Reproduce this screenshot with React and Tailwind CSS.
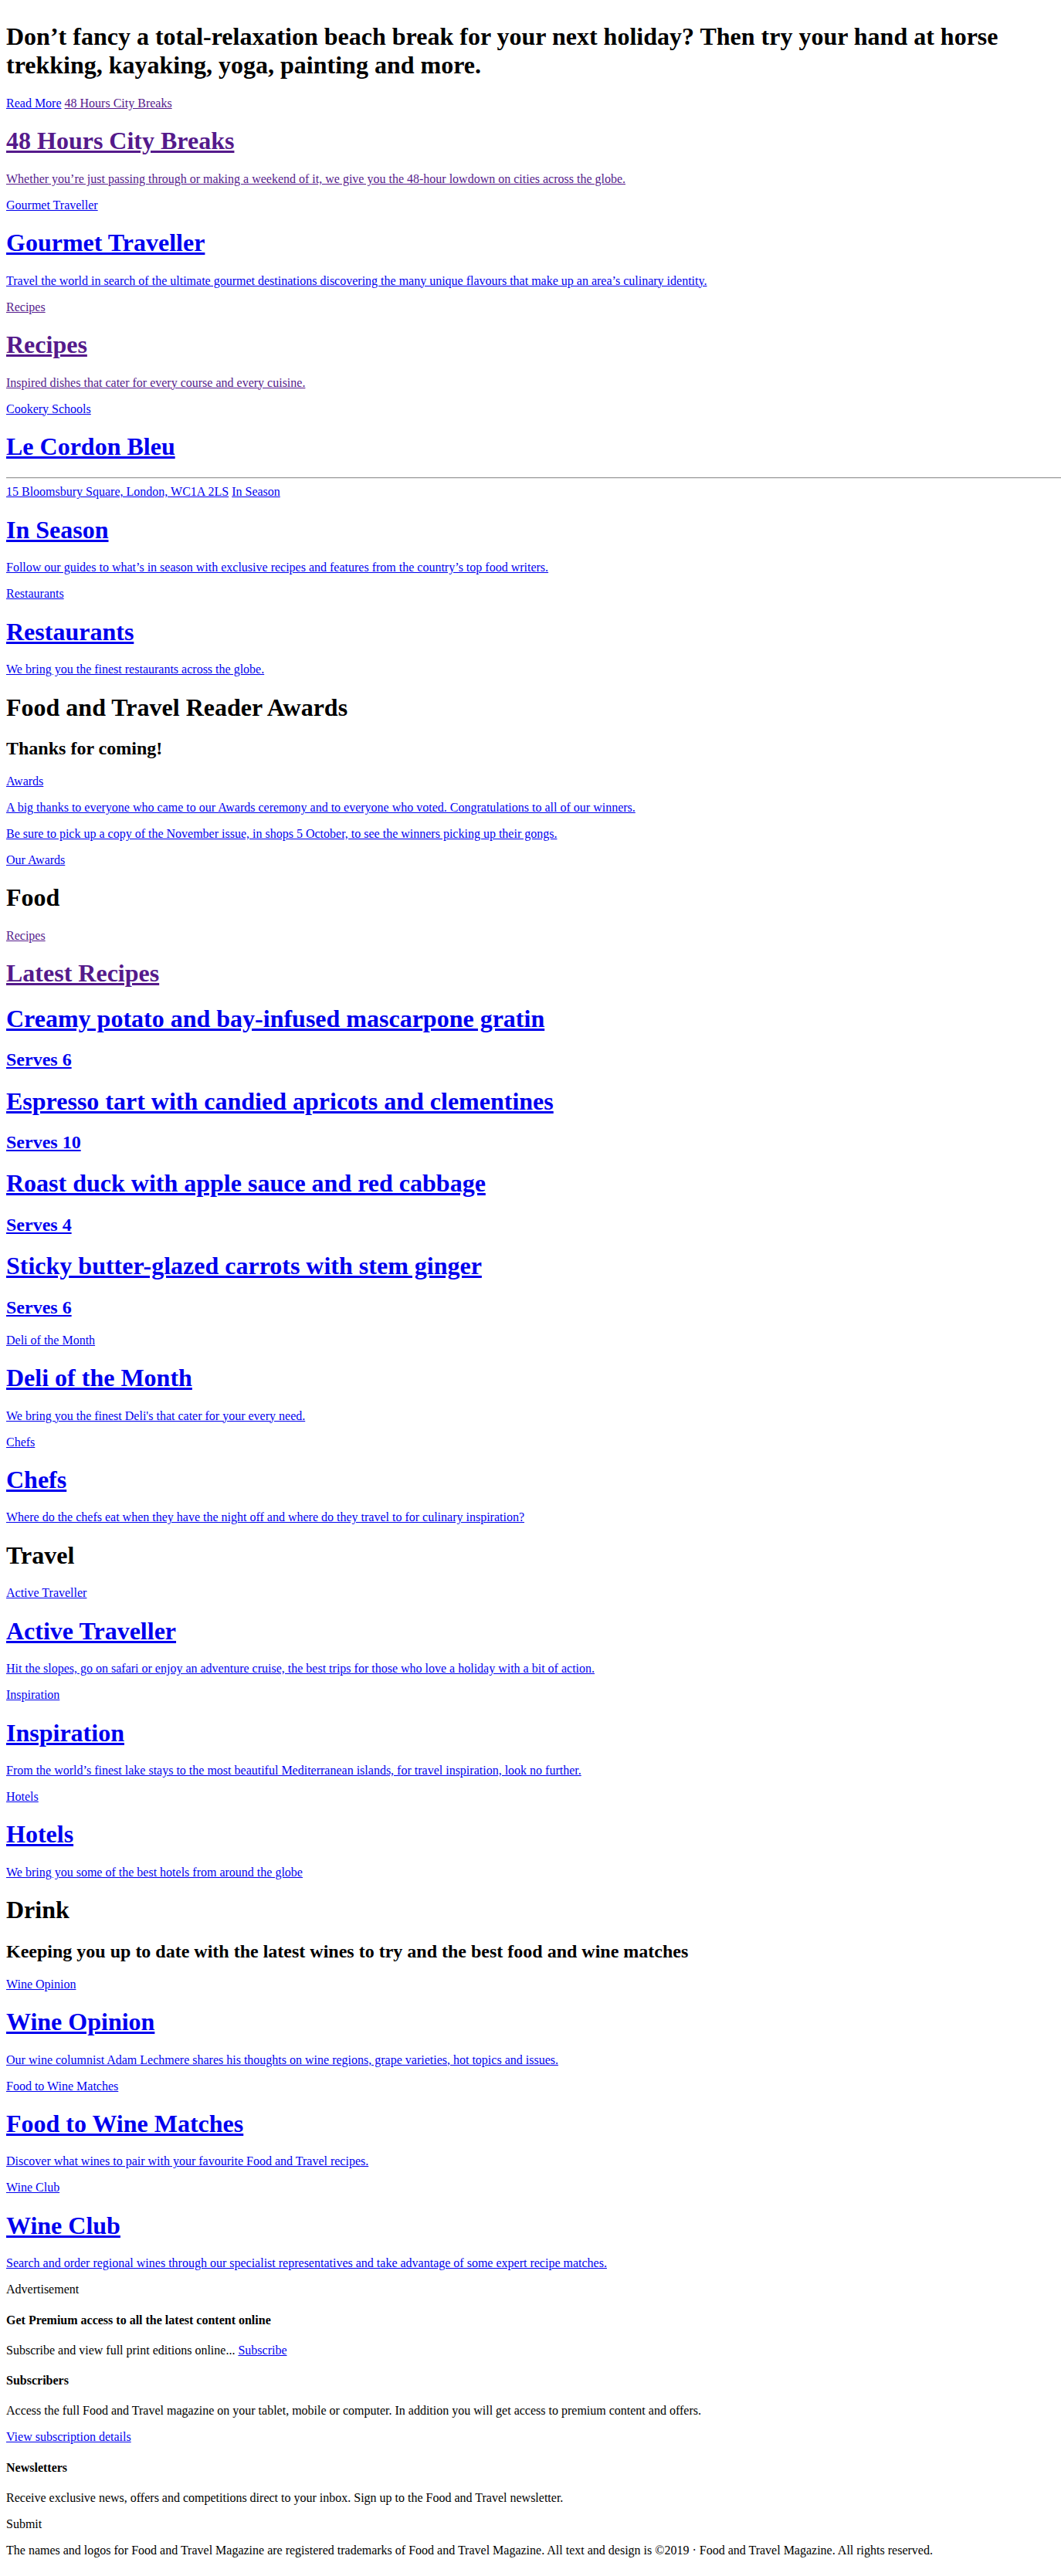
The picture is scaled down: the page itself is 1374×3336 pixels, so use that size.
const BLUE = 'text-[#0000ee] underline';
const PURPLE = 'text-[#551a8b] underline';

const H1 = 'text-[32px] font-bold my-[21.44px]';
const H2 = 'text-[24px] font-bold my-[19.92px]';
const H4 = 'text-[16px] font-bold my-[21.28px]';
const P = 'my-4';

function Feature({ label, title, text, visited }) {
  const link = visited ? PURPLE : BLUE;
  return (
    <>
      {label && (
        <p className={P}>
          <a href="#" className={link}>{label}</a>
        </p>
      )}
      <h1 className={H1}>
        <a href="#" className={link}>{title}</a>
      </h1>
      <p className={P}>
        <a href="#" className={link}>{text}</a>
      </p>
    </>
  );
}

const recipes = [
  ['Creamy potato and bay-infused mascarpone gratin', 'Serves 6'],
  ['Espresso tart with candied apricots and clementines', 'Serves 10'],
  ['Roast duck with apple sauce and red cabbage', 'Serves 4'],
  ['Sticky butter-glazed carrots with stem ginger', 'Serves 6'],
];

export default function App() {
  return (
    <div className="p-2 bg-white text-black text-[16px] leading-[normal] font-['Liberation_Serif','Times_New_Roman',serif]">
      <h1 className={H1}>
        Don’t fancy a total-relaxation beach break for your next holiday? Then try your hand at horse trekking, kayaking, yoga, painting and more.
      </h1>
      <p className={P}>
        <a href="#" className={BLUE}>Read More</a>{' '}
        <a href="#" className={PURPLE}>48 Hours City Breaks</a>
      </p>
      <Feature
        visited
        title="48 Hours City Breaks"
        text="Whether you’re just passing through or making a weekend of it, we give you the 48-hour lowdown on cities across the globe."
      />
      <Feature
        label="Gourmet Traveller"
        title="Gourmet Traveller"
        text="Travel the world in search of the ultimate gourmet destinations discovering the many unique flavours that make up an area’s culinary identity."
      />
      <Feature
        visited
        label="Recipes"
        title="Recipes"
        text="Inspired dishes that cater for every course and every cuisine."
      />
      <p className={P}>
        <a href="#" className={BLUE}>Cookery Schools</a>
      </p>
      <h1 className={H1}>
        <a href="#" className={BLUE}>Le Cordon Bleu</a>
      </h1>
      {/* hr runs past the right padding in the original */}
      <div className="my-2 -mr-2 h-0 border-t border-b border-t-[#9a9a9a] border-b-[#e4e4e4]" />
      <div>
        <a href="#" className={BLUE}>15 Bloomsbury Square, London, WC1A 2LS</a>{' '}
        <a href="#" className={BLUE}>In Season</a>
      </div>
      <h1 className={H1}>
        <a href="#" className={BLUE}>In Season</a>
      </h1>
      <p className={P}>
        <a href="#" className={BLUE}>Follow our guides to what’s in season with exclusive recipes and features from the country’s top food writers.</a>
      </p>
      <Feature
        label="Restaurants"
        title="Restaurants"
        text="We bring you the finest restaurants across the globe."
      />

      <h1 className={H1}>Food and Travel Reader Awards</h1>
      <h2 className={H2}>Thanks for coming!</h2>
      <p className={P}>
        <a href="#" className={BLUE}>Awards</a>
      </p>
      <p className={P}>
        <a href="#" className={BLUE}>A big thanks to everyone who came to our Awards ceremony and to everyone who voted. Congratulations to all of our winners.</a>
      </p>
      <p className={P}>
        <a href="#" className={BLUE}>Be sure to pick up a copy of the November issue, in shops 5 October, to see the winners picking up their gongs.</a>
      </p>
      <p className={P}>
        <a href="#" className={BLUE}>Our Awards</a>
      </p>

      <h1 className={H1}>Food</h1>
      <p className={P}>
        <a href="#" className={PURPLE}>Recipes</a>
      </p>
      <h1 className={H1}>
        <a href="#" className={PURPLE}>Latest Recipes</a>
      </h1>
      {recipes.map(([name, serves], i) => (
        <div key={i}>
          <h1 className={H1}>
            <a href="#" className={BLUE}>{name}</a>
          </h1>
          <h2 className={H2}>
            <a href="#" className={BLUE}>{serves}</a>
          </h2>
        </div>
      ))}
      <Feature
        label="Deli of the Month"
        title="Deli of the Month"
        text="We bring you the finest Deli's that cater for your every need."
      />
      <Feature
        label="Chefs"
        title="Chefs"
        text="Where do the chefs eat when they have the night off and where do they travel to for culinary inspiration?"
      />

      <h1 className={H1}>Travel</h1>
      <Feature
        label="Active Traveller"
        title="Active Traveller"
        text="Hit the slopes, go on safari or enjoy an adventure cruise, the best trips for those who love a holiday with a bit of action."
      />
      <Feature
        label="Inspiration"
        title="Inspiration"
        text="From the world’s finest lake stays to the most beautiful Mediterranean islands, for travel inspiration, look no further."
      />
      <Feature
        label="Hotels"
        title="Hotels"
        text="We bring you some of the best hotels from around the globe"
      />

      <h1 className={H1}>Drink</h1>
      <h2 className={H2}>Keeping you up to date with the latest wines to try and the best food and wine matches</h2>
      <Feature
        label="Wine Opinion"
        title="Wine Opinion"
        text="Our wine columnist Adam Lechmere shares his thoughts on wine regions, grape varieties, hot topics and issues."
      />
      <Feature
        label="Food to Wine Matches"
        title="Food to Wine Matches"
        text="Discover what wines to pair with your favourite Food and Travel recipes."
      />
      <Feature
        label="Wine Club"
        title="Wine Club"
        text="Search and order regional wines through our specialist representatives and take advantage of some expert recipe matches."
      />

      <p className={P}>Advertisement</p>
      <h4 className={H4}>Get Premium access to all the latest content online</h4>
      <p className={P}>
        Subscribe and view full print editions online...{' '}
        <a href="#" className={BLUE}>Subscribe</a>
      </p>
      <h4 className={H4}>Subscribers</h4>
      <p className={P}>
        Access the full Food and Travel magazine on your tablet, mobile or computer. In addition you will get access to premium content and offers.
      </p>
      <p className={P}>
        <a href="#" className={BLUE}>View subscription details</a>
      </p>
      <h4 className={H4}>Newsletters</h4>
      <p className={P}>
        Receive exclusive news, offers and competitions direct to your inbox. Sign up to the Food and Travel newsletter.
      </p>
      <p className={P}>Submit</p>
      <p className={P}>
        The names and logos for Food and Travel Magazine are registered trademarks of Food and Travel Magazine. All text and design is ©2019 · Food and Travel Magazine. All rights reserved.
      </p>
    </div>
  );
}
